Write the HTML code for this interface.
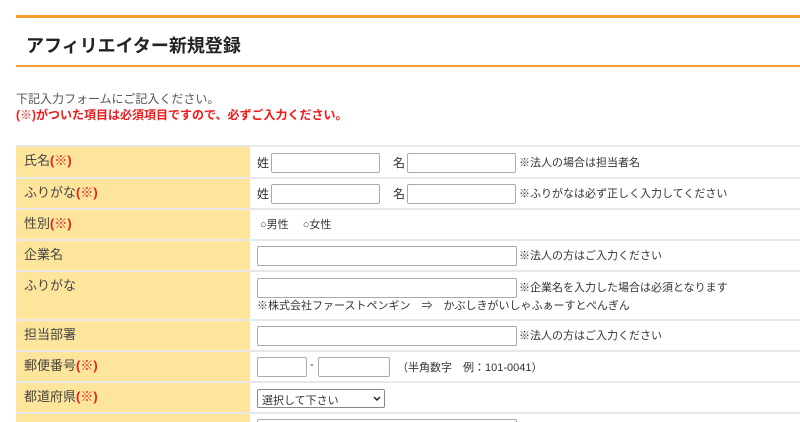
<!DOCTYPE html>
<html><head><meta charset="utf-8"><style>
*{margin:0;padding:0;box-sizing:border-box}
html,body{width:800px;height:422px;overflow:hidden}
body{background:#fff;font-family:"Liberation Sans","Noto Sans CJK JP",sans-serif;color:#333;position:relative}
.a{position:absolute;white-space:nowrap}
.line{position:absolute;left:16px;right:0;background:#f7a030}
.lab{position:absolute;left:16px;width:234px;background:#fde59c;font-size:13px;color:#444;padding-left:8px}
.rb{position:absolute;left:16px;right:0;height:2px;background:#e8e8e8}
.r{color:#e62020;font-weight:bold}
.in{position:absolute;height:20px;border:1px solid #aaa;border-radius:2px;background:#fff}
.t{position:absolute;font-size:12px;color:#333;white-space:nowrap}
</style></head><body>
<div class="line" style="top:15px;height:3px"></div>
<div class="a" style="left:26px;top:32px;font-size:18px;font-weight:bold;color:#222">アフィリエイター新規登録</div>
<div class="line" style="top:65px;height:2px"></div>
<div class="a" style="left:16px;top:90px;font-size:12px;color:#555">下記入力フォームにご記入ください。</div>
<div class="a" style="left:16px;top:106px;font-size:12px;color:#f01818;font-weight:bold">(※)がついた項目は必須項目ですので、必ずご入力ください。</div>

<div class="rb" style="top:145px"></div>
<div class="lab" style="top:147px;height:30px;line-height:28px">氏名<span class="r">(※)</span></div>
<div class="rb" style="top:177px"></div>
<div class="lab" style="top:179px;height:29px;line-height:28px">ふりがな<span class="r">(※)</span></div>
<div class="rb" style="top:208px"></div>
<div class="lab" style="top:210px;height:29px;line-height:28px">性別<span class="r">(※)</span></div>
<div class="rb" style="top:239px"></div>
<div class="lab" style="top:241px;height:29px;line-height:28px">企業名</div>
<div class="rb" style="top:270px"></div>
<div class="lab" style="top:272px;height:47px;line-height:28px">ふりがな</div>
<div class="rb" style="top:319px"></div>
<div class="lab" style="top:321px;height:29px;line-height:28px">担当部署</div>
<div class="rb" style="top:350px"></div>
<div class="lab" style="top:352px;height:29px;line-height:28px">郵便番号<span class="r">(※)</span></div>
<div class="rb" style="top:381px"></div>
<div class="lab" style="top:383px;height:29px;line-height:28px">都道府県<span class="r">(※)</span></div>
<div class="rb" style="top:412px"></div>
<div class="lab" style="top:414px;height:8px"></div>

<div class="t" style="left:257px;top:154px">姓</div>
<div class="in" style="left:271px;top:153px;width:109px"></div>
<div class="t" style="left:393px;top:154px">名</div>
<div class="in" style="left:407px;top:153px;width:109px"></div>
<div class="t" style="left:519px;top:154px;font-size:11px">※法人の場合は担当者名</div>

<div class="t" style="left:257px;top:185px">姓</div>
<div class="in" style="left:271px;top:184px;width:109px"></div>
<div class="t" style="left:393px;top:185px">名</div>
<div class="in" style="left:407px;top:184px;width:109px"></div>
<div class="t" style="left:519px;top:185px;font-size:11px">※ふりがなは必ず正しく入力してください</div>

<div class="t" style="left:260px;top:216px;font-size:11px">○男性　 ○女性</div>

<div class="in" style="left:257px;top:246px;width:260px"></div>
<div class="t" style="left:519px;top:247px;font-size:11px">※法人の方はご入力ください</div>

<div class="in" style="left:257px;top:278px;width:260px"></div>
<div class="t" style="left:519px;top:279px;font-size:11px">※企業名を入力した場合は必須となります</div>
<div class="t" style="left:257px;top:297px;font-size:11px">※株式会社ファーストペンギン　⇒　かぶしきがいしゃふぁーすとぺんぎん</div>

<div class="in" style="left:257px;top:326px;width:260px"></div>
<div class="t" style="left:519px;top:327px;font-size:11px">※法人の方はご入力ください</div>

<div class="in" style="left:257px;top:357px;width:50px"></div>
<div class="t" style="left:310px;top:359px;font-size:11px">-</div>
<div class="in" style="left:318px;top:357px;width:72px"></div>
<div class="t" style="left:397px;top:359px;font-size:11px">（半角数字　例：101-0041）</div>

<div class="in" style="left:257px;top:389px;width:128px;height:19px;border-color:#888"></div>
<div class="t" style="left:262px;top:392px;font-size:11px">選択して下さい</div>
<svg class="a" style="left:373px;top:396px" width="8" height="6"><path d="M1 1L4 4L7 1" stroke="#222" stroke-width="1.5" fill="none"/></svg>
<div class="in" style="left:257px;top:419px;width:260px"></div>
</body></html>
